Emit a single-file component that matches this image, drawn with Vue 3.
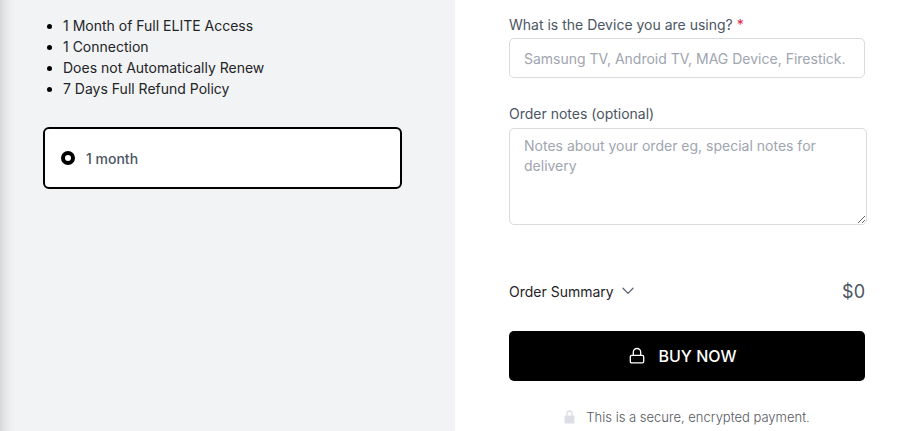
<script setup>
import { ref } from 'vue'

const features = [
  '1 Month of Full ELITE Access',
  '1 Connection',
  'Does not Automatically Renew',
  '7 Days Full Refund Policy',
]
const plan = ref('1-month')
const device = ref('')
const notes = ref('')
</script>

<template>
  <main class="checkout">
    <section class="offer">
      <ul class="features">
        <li v-for="item in features" :key="item">{{ item }}</li>
      </ul>
      <label class="plan">
        <input v-model="plan" type="radio" name="plan" value="1-month" />
        <span>1 month</span>
      </label>
    </section>

    <form class="order" @submit.prevent>
      <div class="field">
        <label for="device">What is the Device you are using? <span class="required">*</span></label>
        <input id="device" v-model="device" type="text" required placeholder="Samsung TV, Android TV, MAG Device, Firestick." />
      </div>
      <div class="field notes">
        <label for="notes">Order notes (optional)</label>
        <textarea id="notes" v-model="notes" placeholder="Notes about your order eg, special notes for delivery"></textarea>
      </div>
      <div class="summary">
        <button type="button" class="toggle">
          Order Summary
          <svg width="12" height="8" viewBox="0 0 12 8" fill="none" stroke="#5f6673" stroke-width="1.3" stroke-linecap="round" stroke-linejoin="round" aria-hidden="true">
            <path d="M1 1.2 6 6.4 11 1.2" />
          </svg>
        </button>
        <span class="total">$0</span>
      </div>
      <button type="submit" class="buy">
        <svg width="16" height="18" viewBox="0 0 16 18" fill="none" stroke="#fff" stroke-width="1.3" stroke-linecap="round" stroke-linejoin="round" aria-hidden="true">
          <path d="M4.3 8.3V5.2a3.7 3.7 0 0 1 7.4 0v3.1" />
          <rect x="1.3" y="8.3" width="13.4" height="7.6" rx="1.4" />
        </svg>
        BUY NOW
      </button>
      <p class="secure">
        <svg width="11" height="14" viewBox="0 0 11 14" aria-hidden="true">
          <path d="M3 6V3.5a2.5 2.5 0 0 1 5 0V6" fill="none" stroke="#dddde6" stroke-width="1.3" />
          <rect x="0.5" y="5.5" width="10" height="8" rx="1.3" fill="#dddde6" />
        </svg>
        This is a secure, encrypted payment.
      </p>
    </form>
  </main>
</template>

<style>
body {
  margin: 0;
  background: #fff;
}
</style>

<style scoped>
.checkout {
  display: grid;
  grid-template-columns: 455fr 463fr;
  min-height: 100vh;
  font-family: Inter, "Liberation Sans", sans-serif;
  font-size: 14px;
  color: #4b5563;
}
.checkout * {
  box-sizing: border-box;
}
.offer {
  padding: 15px 53px 16px 43px;
  background: linear-gradient(to right, #d7d8da 0, #e4e5e7 5px, #eeeff1 10px, #f2f3f5 16px);
}
.features {
  margin: 0 0 28px;
  padding-left: 20px;
  line-height: 21px;
  color: #222426;
}
.features li::marker {
  color: #000;
}
.plan {
  display: flex;
  align-items: center;
  gap: 11px;
  height: 62px;
  padding: 0 16px;
  border: 2px solid #000;
  border-radius: 6px;
  background: #fff;
  font-weight: 500;
}
.plan input {
  appearance: none;
  width: 14px;
  height: 14px;
  margin: 0;
  border: 4px solid #000;
  border-radius: 50%;
  background: #fff;
}
.order {
  padding: 15px 53px 0 54px;
}
.field {
  display: flex;
  flex-direction: column;
  gap: 3px;
}
.field label {
  line-height: 20px;
}
.required {
  color: #e11d48;
}
.field input,
.field textarea {
  width: 100%;
  border: 1px solid #d9dbdf;
  border-radius: 5px;
  background: #fff;
  font: inherit;
  line-height: 20px;
  color: #4b5563;
}
.field input {
  height: 40px;
  padding: 0 14px;
}
.field textarea {
  width: calc(100% + 2px);
  height: 97px;
  padding: 7px 14px;
}
.field ::placeholder {
  color: #a0a5b0;
  opacity: 1;
}
.notes {
  margin-top: 26px;
  gap: 4px;
}
.summary {
  display: flex;
  align-items: center;
  justify-content: space-between;
  height: 28px;
  margin-top: 52px;
}
.toggle {
  display: flex;
  align-items: center;
  gap: 8px;
  padding: 0;
  border: 0;
  background: none;
  font: inherit;
  color: #1f2226;
}
.total {
  font-size: 18px;
}
.buy {
  display: flex;
  align-items: center;
  justify-content: center;
  gap: 13px;
  width: 100%;
  height: 50px;
  margin-top: 26px;
  padding: 0 16px 0 8px;
  border: 0;
  border-radius: 5px;
  background: #000;
  color: #fff;
  font: 500 16px Inter, "Liberation Sans", sans-serif;
}
.secure {
  display: flex;
  align-items: center;
  justify-content: center;
  gap: 11px;
  margin: 26px 0 0;
  font-size: 13px;
  font-weight: 300;
  line-height: 20px;
  color: #55585e;
}
</style>
